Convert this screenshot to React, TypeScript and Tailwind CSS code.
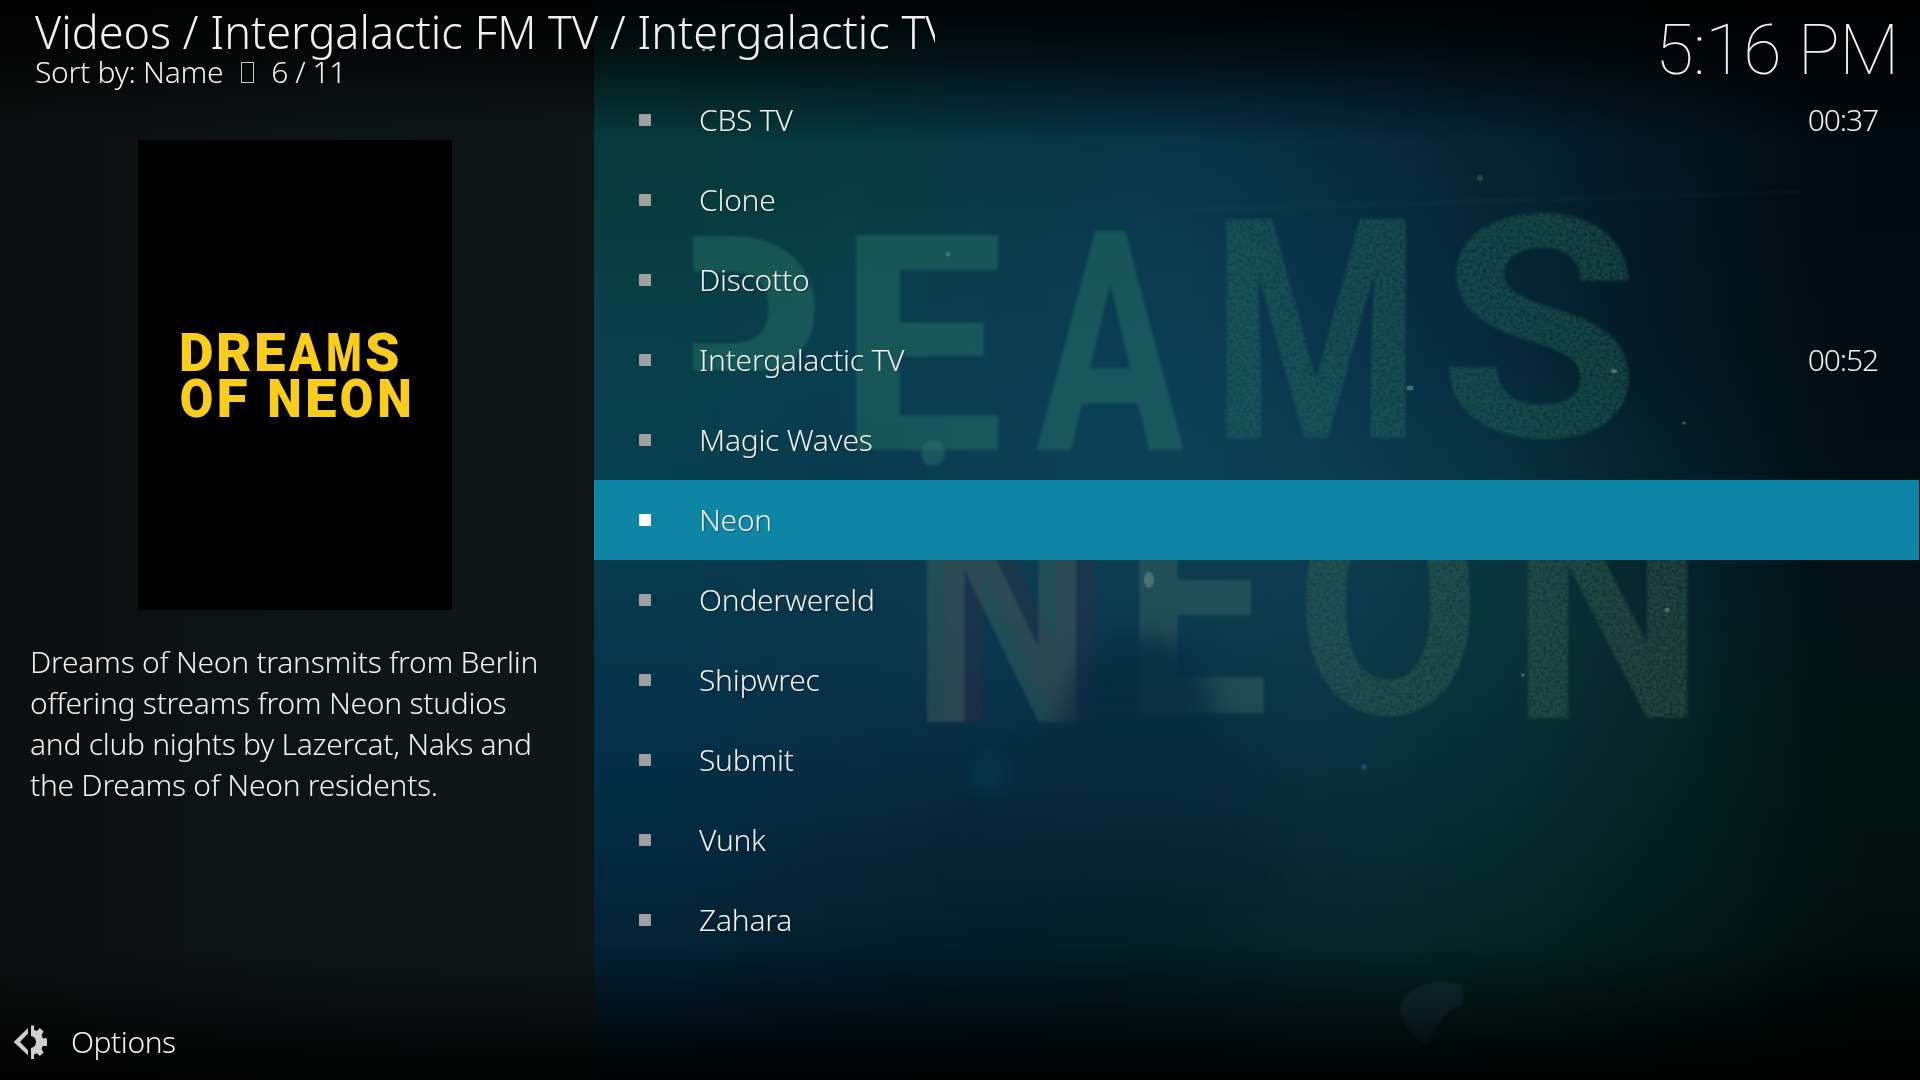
import React from "react";

const mesh: string[][] = [
  ["#073a3c", "#07343c", "#073040", "#072c40", "#06283a", "#051e2c", "#03141d", "#010a10"],
  ["#083a3c", "#073d3e", "#083a48", "#0a3a4c", "#082f42", "#052532", "#03161f", "#010a10"],
  ["#083f49", "#0a4050", "#0b3d50", "#0b3f54", "#0a3348", "#06273a", "#03171f", "#010c12"],
  ["#07404f", "#08394e", "#0c4054", "#0c4256", "#0b3d50", "#083340", "#042028", "#010e14"],
  ["#06394c", "#0a364a", "#0b3c50", "#0c3c50", "#0c3c4c", "#0a343c", "#06262c", "#020f14"],
  ["#053048", "#0a2e46", "#082d42", "#0a2e42", "#0c3242", "#062e34", "#042424", "#01120f"],
  ["#03283e", "#042434", "#04222e", "#042228", "#062a30", "#03292a", "#021e1e", "#011010"],
  ["#021c2a", "#021824", "#021820", "#031a20", "#041f22", "#031c1a", "#021412", "#010a08"],
];

type GlyphProps = { ch: string; x: number; y: number; w: number; h: number };

/* One letter stretched so that its capital fills the given box. */
function Glyph({ ch, x, y, w, h }: GlyphProps) {
  const size = h / 0.711;
  const pad = ch === "A" ? 0 : size * 0.045;
  return (
    <text
      x={x - pad}
      y={y + h}
      fontSize={size}
      textLength={w + pad * 2}
      lengthAdjust="spacingAndGlyphs"
    >
      {ch}
    </text>
  );
}

function Backdrop() {
  return (
    <svg
      className="absolute inset-0"
      width="1920"
      height="1080"
      viewBox="0 0 1920 1080"
      fontFamily="Roboto, sans-serif"
      fontWeight="700"
      aria-hidden="true"
    >
      <defs>
        <filter id="soften" x="-20%" y="-20%" width="140%" height="140%" colorInterpolationFilters="sRGB">
          <feGaussianBlur stdDeviation="60" />
        </filter>
        <filter id="smoke" x="-50%" y="-50%" width="200%" height="200%" colorInterpolationFilters="sRGB">
          <feGaussianBlur stdDeviation="12" />
        </filter>
        <filter id="edge" x="-10%" y="-10%" width="120%" height="120%" colorInterpolationFilters="sRGB">
          <feGaussianBlur stdDeviation="1.6" />
        </filter>
        <filter id="grain" x="-5%" y="-5%" width="110%" height="110%" colorInterpolationFilters="sRGB">
          <feTurbulence type="fractalNoise" baseFrequency="0.3" numOctaves="2" seed="4" result="n" />
          <feColorMatrix in="n" type="matrix" values="0 0 0 0 1  0 0 0 0 1  0 0 0 0 1  0 1.6 0 0 0" result="a" />
          <feGaussianBlur in="SourceGraphic" stdDeviation="1.4" result="s" />
          <feComposite in="s" in2="a" operator="in" />
        </filter>
        <linearGradient id="topShade" x1="0" y1="0" x2="0" y2="1">
          <stop offset="0" stopColor="#000" stopOpacity="0.95" />
          <stop offset="0.4" stopColor="#000" stopOpacity="0.66" />
          <stop offset="1" stopColor="#000" stopOpacity="0" />
        </linearGradient>
        <linearGradient id="bottomShade" x1="0" y1="0" x2="0" y2="1">
          <stop offset="0" stopColor="#000" stopOpacity="0" />
          <stop offset="0.7" stopColor="#000" stopOpacity="0.64" />
          <stop offset="1" stopColor="#000" stopOpacity="0.92" />
        </linearGradient>
        <linearGradient id="figure" gradientUnits="userSpaceOnUse" x1="0" y1="630" x2="0" y2="900">
          <stop offset="0" stopColor="#082e42" stopOpacity="0.95" />
          <stop offset="0.4" stopColor="#082c40" stopOpacity="0.8" />
          <stop offset="1" stopColor="#062636" stopOpacity="0" />
        </linearGradient>
        <linearGradient id="side" x1="0" y1="0" x2="1" y2="0">
          <stop offset="0" stopColor="#0c0e0f" />
          <stop offset="0.6" stopColor="#0e1517" />
          <stop offset="1" stopColor="#101618" />
        </linearGradient>
      </defs>

      <rect width="1920" height="1080" fill="#04202c" />
      <g filter="url(#soften)">
        {mesh.map((row, r) =>
          row.map((color, c) => {
            const left = c === 0 ? 300 : 594 + c * 166;
            const right = c === 7 ? 2200 : 594 + (c + 1) * 166;
            const top = r === 0 ? -250 : r * 135;
            const bottom = r === 7 ? 1330 : (r + 1) * 135;
            return (
              <rect key={`${r}-${c}`} x={left} y={top} width={right - left + 1} height={bottom - top + 1} fill={color} />
            );
          }),
        )}
      </g>

      <g fill="#2c7a68" fillOpacity="0.42" filter="url(#edge)">
        <svg x="693" y="220" width="125" height="150" viewBox="693 220 125 150">
          <Glyph ch="P" x={640} y={236} w={172} h={222} />
        </svg>
        <Glyph ch="E" x={851} y={235} w={140} h={215} />
        <Glyph ch="A" x={1036} y={231} w={148} h={219} />
      </g>
      <g fill="#2b7060" fillOpacity="0.45" filter="url(#grain)">
        <Glyph ch="M" x={1225} y={219} w={182} h={219} />
        <Glyph ch="S" x={1452} y={216} w={174} h={220} />
      </g>
      <g filter="url(#edge)">
        <g fill="#43283f" fillOpacity="0.3">
          <Glyph ch="N" x={943} y={495} w={153} h={227} />
        </g>
        <g fill="#4f7466" fillOpacity="0.34">
          <Glyph ch="N" x={925} y={495} w={153} h={227} />
          <Glyph ch="E" x={1137} y={488} w={118} h={225} />
        </g>
      </g>
      <g fill="#3f6656" fillOpacity="0.48" filter="url(#grain)">
        <Glyph ch="O" x={1309} y={488} w={158} h={225} />
        <Glyph ch="N" x={1525} y={490} w={165} h={228} />
      </g>

      <path
        d="M1075 680 Q1090 638 1140 636 Q1196 638 1210 690 L1224 750 Q1270 790 1264 850 Q1250 920 1220 1000 L960 1000 Q930 850 1010 780 Q1050 750 1075 680Z"
        fill="url(#figure)"
        filter="url(#smoke)"
      />
      <ellipse cx="990" cy="775" rx="12" ry="14" fill="#0d5570" fillOpacity="0.5" filter="url(#smoke)" />
      <path
        d="M1400 1010 Q1402 986 1440 982 L1462 984 L1463 1004 Q1440 1012 1428 1045 Q1405 1035 1400 1010Z"
        fill="#1c3c48"
        fillOpacity="0.55"
        filter="url(#edge)"
      />
      <ellipse cx="933" cy="453" rx="12" ry="13" fill="#3a8077" fillOpacity="0.35" filter="url(#edge)" />
      <path d="M1190 206 L1800 190 L1800 194 L1190 214Z" fill="#1c5560" fillOpacity="0.09" filter="url(#edge)" />
      <g fill="#7fa896" fillOpacity="0.5">
        <ellipse cx="1149" cy="580" rx="5" ry="8" fillOpacity="0.4" />
        <ellipse cx="1410" cy="388" rx="3.5" ry="2.5" />
        <circle cx="1684" cy="423" r="1.6" />
        <circle cx="1667" cy="610" r="2.4" />
        <circle cx="1523" cy="675" r="1.8" />
        <ellipse cx="1614" cy="371" rx="3.5" ry="2" />
        <circle cx="1480" cy="178" r="3" fillOpacity="0.25" />
        <circle cx="948" cy="254" r="2.5" fillOpacity="0.35" />
        <circle cx="1364" cy="767" r="3" fill="#2c5a96" />
      </g>

      <rect width="594" height="1080" fill="url(#side)" />
      <rect width="1920" height="140" fill="url(#topShade)" />
      <rect y="950" width="1920" height="130" fill="url(#bottomShade)" />
    </svg>
  );
}

const rows: { name: string; time?: string }[] = [
  { name: "CBS TV", time: "00:37" },
  { name: "Clone" },
  { name: "Discotto" },
  { name: "Intergalactic TV", time: "00:52" },
  { name: "Magic Waves" },
  { name: "Neon" },
  { name: "Onderwereld" },
  { name: "Shipwrec" },
  { name: "Submit" },
  { name: "Vunk" },
  { name: "Zahara" },
];
const selected = 5;

function Header() {
  return (
    <header className="flex h-20 shrink-0 justify-between pl-[35px] pr-[21px]">
      <div className="w-[900px] shrink-0">
        <div className="h-[64px] overflow-hidden whitespace-nowrap text-[45px] leading-[64px] tracking-normal">
          Videos / Intergalactic FM TV / Intergalactic TV
        </div>
        <div className="-mt-[14px] flex h-[44px] items-center whitespace-nowrap leading-[44px]">
          <span>Sort by: Name</span>
          <span className="ml-[18px] mt-[1px] h-[21px] w-[13px] border border-[#c8c8c8]" />
          <span className="ml-[17px] tracking-[-0.45px]">6 / 11</span>
        </div>
      </div>
      <div className="whitespace-nowrap font-[Roboto] text-[70px] font-thin leading-[100px] tracking-[-0.35px]">5:16 PM</div>
    </header>
  );
}

function Poster() {
  return (
    <svg
      className="ml-[138px] mt-[60px] block shrink-0 bg-black"
      width="314"
      height="470"
      viewBox="138 140 314 470"
      fontFamily="Roboto, sans-serif"
      fontWeight="900"
      fill="#facc1e"
    >
      <Glyph ch="D" x={181.5} y={333} w={29.5} h={37.5} />
      <Glyph ch="R" x={218.5} y={333} w={30.5} h={37.5} />
      <Glyph ch="E" x={256.5} y={333} w={26.5} h={37.5} />
      <Glyph ch="A" x={289} y={333} w={32} h={37.5} />
      <Glyph ch="M" x={328.5} y={333} w={30.5} h={37.5} />
      <Glyph ch="S" x={367.5} y={333} w={29.5} h={37.5} />
      <Glyph ch="O" x={182} y={379} w={28.5} h={37.5} />
      <Glyph ch="F" x={219} y={379} w={26} h={37.5} />
      <Glyph ch="N" x={269.5} y={379} w={29.5} h={37.5} />
      <Glyph ch="E" x={307.5} y={379} w={26.5} h={37.5} />
      <Glyph ch="O" x={342} y={379} w={28.5} h={37.5} />
      <Glyph ch="N" x={379.5} y={379} w={29.5} h={37.5} />
    </svg>
  );
}

function OptionsIcon() {
  return (
    <svg width="34" height="36" viewBox="14 1024 34 36" fill="#cfcfcf">
      <path d="M13.7 1042 L28 1028 V1033.4 L20 1042 L28 1050.2 V1055.5Z" />
      <path d="M31 1025.5 H34 V1030 L37 1031 L39.8 1028 L43.6 1031.5 L41.5 1035.3 L42.8 1038.2 H47 V1046 H42.8 L41.5 1049 L43.6 1052.5 L39.8 1056 L37 1053.2 L34 1054.5 V1059 H31 V1048 Q36 1047 36 1042 Q36 1037 31 1036Z" />
    </svg>
  );
}

export default function App() {
  return (
    <div className="relative h-[1080px] w-[1920px] overflow-hidden bg-black font-['Noto_Sans',sans-serif] text-[30px] font-light tracking-[-0.27px] text-[#f0f0f0]">
      <Backdrop />
      <div className="relative flex h-full flex-col">
        <Header />
        <div className="flex h-[880px] shrink-0">
          <aside className="flex w-[594px] shrink-0 flex-col">
            <Poster />
            <p className="ml-[30px] mt-[31px] w-[530px] whitespace-nowrap leading-[41px]">
              Dreams of Neon transmits from Berlin
              <br />
              offering streams from Neon studios
              <br />
              and club nights by Lazercat, Naks and
              <br />
              the Dreams of Neon residents.
            </p>
          </aside>
          <ul className="flex-1">
            {rows.map((row, i) => (
              <li
                key={row.name}
                className={
                  i === selected
                    ? "mr-px flex h-20 items-center bg-[#0f85a5] pl-[45px] pr-[41px]"
                    : "mr-px flex h-20 items-center pl-[45px] pr-[41px]"
                }
              >
                <span className={i === selected ? "size-3 rounded-[1px] bg-white" : "size-3 rounded-[1px] bg-[#a0a0a0]"} />
                <span className="-mt-[2px] ml-[48px] flex-1 [text-shadow:1px_1px_1px_rgba(0,0,0,0.35)]">{row.name}</span>
                {row.time && <span className="-mt-[2px] tracking-[-1.1px]">{row.time}</span>}
              </li>
            ))}
          </ul>
        </div>
        <footer className="flex h-[120px] items-center pl-[14px] pt-[44px]">
          <OptionsIcon />
          <span className="-mt-[2px] ml-[23px] tracking-[-0.45px]">Options</span>
        </footer>
      </div>
      <div className="absolute left-[702px] top-[49px] flex gap-[4px]">
        <span className="h-[2px] w-[3px] bg-[#8f9494]" />
        <span className="h-[2px] w-[3px] bg-[#8f9494]" />
      </div>
    </div>
  );
}
